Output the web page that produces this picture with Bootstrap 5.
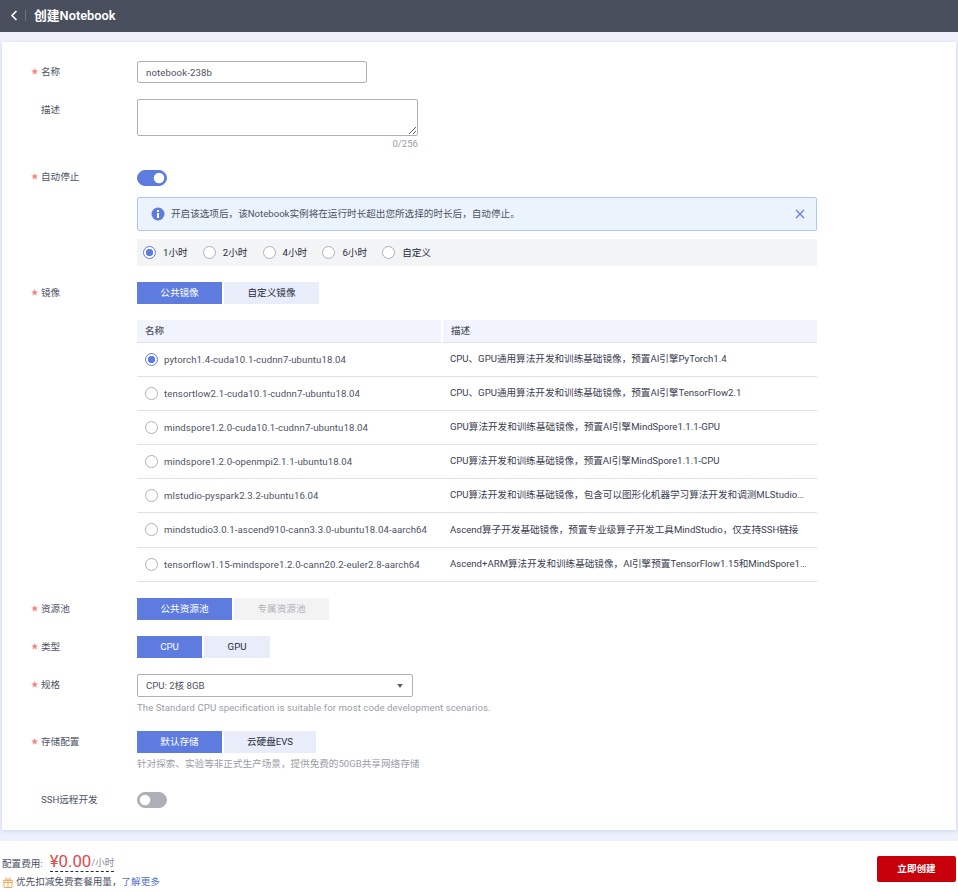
<!DOCTYPE html>
<html lang="zh-CN">
<head>
<meta charset="utf-8">
<title>创建Notebook</title>
<link rel="stylesheet" href="https://cdn.jsdelivr.net/npm/bootstrap@5.3.0/dist/css/bootstrap.min.css">
<style>
html,body{height:892px;overflow:hidden}
body{background:#eef1fb;font-family:Roboto,"Noto Sans CJK SC",sans-serif;font-size:9.6px;line-height:14px;color:#252b3a}
.topbar{height:32px;background:#4a4f5e;color:#fff;padding:0 0 1px 10px}
.topbar h1{font-size:12.8px;font-weight:600;margin:0;line-height:31px}
.topsep{width:1px;height:11px;background:#71757f;margin:0 8px 0 7px}
.sheet{margin:10px 2px 0 2px;height:788px;background:#fff;padding:19px 0 0 29px;box-shadow:0 1px 4px rgba(94,124,224,.25)}
.frow{display:flex}
.flabel{width:106px;flex:none;color:#4d5262;display:flex;align-items:flex-start;line-height:20px;padding-top:1px}
.star{width:10px;flex:none;color:#f5827d;font-size:7.5px}
.up4{margin-top:-4px}
.up3{margin-top:-3px}
.fbody{flex:none;width:680px}
.r-name{height:38px}
.r-desc{height:71px}
.r-stop{height:112px}
.r-img{height:316px}
.r-pool{height:38px}
.r-type{height:38px}
.r-spec{height:57px}
.r-store{height:61px}
.txt{display:block;height:22px;width:230px;border:1px solid #adb0b8;border-radius:2px;padding:0 8px;font-size:9.6px;letter-spacing:.12px;color:#4d5262;background:#fff;box-shadow:none}
.area{display:block;height:37px;width:281px;border:1px solid #adb0b8;border-radius:2px;padding:4px 8px;font-size:9.6px;box-shadow:none}
.count{width:281px;text-align:right;color:#9a9da5;line-height:14px;padding-top:1px}
.sw.form-check{padding:0;margin:0;min-height:0;height:16px;display:flex}
.sw .form-check-input{width:30px;height:16px;margin:0;float:none;border-color:#5e7ce0;background-color:#5e7ce0;box-shadow:none}
.sw .off{background-color:#adb0b8;border-color:#adb0b8;background-image:url("data:image/svg+xml,%3csvg xmlns='http://www.w3.org/2000/svg' viewBox='-4 -4 8 8'%3e%3ccircle r='3' fill='%23fff'/%3e%3c/svg%3e")}
.note{margin:11px 0 8px;height:34px;padding:0 11px 0 13px;background:#ebf4fd;border:1px solid #b1c4f4;border-radius:2px;color:#4d5262;gap:6px}
.note span{flex:1}
.timebar{height:27px;background:#f3f4f6;padding-left:6px;gap:0}
.pick{display:flex;align-items:center;width:59.800px;color:#252b3a}
.pick label{margin-left:7px}
.rd{appearance:none;width:13px;height:13px;margin:0;flex:none;border:1px solid #adb0b8;border-radius:50%;background:#fff;display:block}
.rd:checked{border-color:#5e7ce0;background:radial-gradient(circle,#5e7ce0 0 3.4px,#fff 4px)}
.segs{display:flex;gap:2px}
.seg{height:22px;padding:0;border:0;border-radius:0;font-size:9.6px;line-height:22px;background:#e9edfa;color:#252b3a}
.seg.on{background:#5e7ce0;color:#fff}
.seg.dis{background:#f3f3f3;color:#b0b3ba;opacity:1}
.w85{width:85px}.w95{width:95px}.w92{width:92px}.w65{width:65px}.w66{width:66px}
.imgs{width:680px;margin:16px 0 0;table-layout:fixed;font-size:9.6px;color:#4d5262}
.imgs th,.imgs td{padding:0 8px;vertical-align:middle;height:34px;border-bottom:1px solid #dfe1e6;box-shadow:none;color:#4d5262}
.imgs th{height:22px;background:#f1f4fc;font-weight:500;border-bottom:1px solid #dfe1e6}
.imgs th+th{border-left:2px solid #fff}
.imgs td+td{color:#3b4050;white-space:nowrap;overflow:hidden;text-overflow:ellipsis;padding-right:10px}
.imgname{display:flex;align-items:center;gap:6px;white-space:nowrap}
.imgname span{letter-spacing:.1px;padding-top:1px}
.tall td{height:35px}
.spec{width:276px;height:23px;min-height:0;border:1px solid #adb0b8;border-radius:2px;padding:0 8px;font-size:9.6px;line-height:21px;color:#4d5262;box-shadow:none;background-size:6px 3.5px;background-position:right 9px center;background-image:url("data:image/svg+xml,%3Csvg xmlns='http://www.w3.org/2000/svg' viewBox='0 0 8 5'%3E%3Cpath d='M0 0h8L4 5z' fill='%23575d6c'/%3E%3C/svg%3E")}
.hint{color:#9a9da5;margin-top:3px;line-height:14px;padding-top:1px}
.hint-en{letter-spacing:.08px}
.hint2{margin-top:3px}
.bottom{margin-top:11px;height:51px;background:#fff;padding:0 2px}
.fee{padding-top:10px;color:#4d5262;display:flex;align-items:flex-end;height:31px}
.price{color:#e5484d;font-size:16.800px;line-height:21px;margin-bottom:-1px}
.per{border-bottom:1px dashed #252b3a;height:21px;display:flex;align-items:flex-end;margin-left:7px}
.perw{color:#8a8e99;line-height:16px}
.feelbl{margin-bottom:1px}
.promo{color:#4d5262;line-height:14px;margin-top:3px;gap:3px;padding-left:1px}
.promo a{color:#526ecc;text-decoration:none}
.buy{width:79px;height:26px;padding:0;font-size:9.6px;font-weight:600;color:#fff;background:#c7000b;border:0;border-radius:2px;margin-top:15px}
</style>
</head>
<body>
<header class="topbar d-flex align-items-center">
  <svg width="8" height="11" viewBox="0 0 8 11" aria-hidden="true"><path d="M6.500 1 2 5.500 6.500 10" fill="none" stroke="#fff" stroke-width="1.600"/></svg>
  <span class="topsep"></span>
  <h1>创建Notebook</h1>
</header>
<main class="sheet">
  <div class="frow r-name">
    <div class="flabel"><span class="star">★</span>名称</div>
    <div class="fbody"><input class="form-control txt" value="notebook-238b"></div>
  </div>
  <div class="frow r-desc">
    <div class="flabel"><span class="star"></span>描述</div>
    <div class="fbody"><textarea class="form-control area"></textarea><div class="count">0/256</div></div>
  </div>
  <div class="frow r-stop">
    <div class="flabel up4"><span class="star">★</span>自动停止</div>
    <div class="fbody">
      <div class="form-check form-switch sw"><input class="form-check-input" type="checkbox" checked></div>
      <div class="alert note d-flex align-items-center">
        <svg width="14" height="14" viewBox="0 0 14 14" aria-hidden="true"><circle cx="7" cy="7" r="6.500" fill="#5e7ce0"/><rect x="6" y="6" width="2" height="5" fill="#fff"/><rect x="6" y="3" width="2" height="2" fill="#fff"/></svg>
        <span>开启该选项后，该Notebook实例将在运行时长超出您所选择的时长后，自动停止。</span>
        <svg width="10" height="10" viewBox="0 0 10 10" aria-hidden="true"><path d="M1 1l8 8M9 1 1 9" stroke="#5e7ce0" stroke-width="1.200" fill="none"/></svg>
      </div>
      <div class="timebar d-flex align-items-center">
        <div class="pick"><input class="rd" type="radio" name="t" id="t1" checked><label for="t1">1小时</label></div>
        <div class="pick"><input class="rd" type="radio" name="t" id="t2"><label for="t2">2小时</label></div>
        <div class="pick"><input class="rd" type="radio" name="t" id="t4"><label for="t4">4小时</label></div>
        <div class="pick"><input class="rd" type="radio" name="t" id="t6"><label for="t6">6小时</label></div>
        <div class="pick"><input class="rd" type="radio" name="t" id="tc"><label for="tc">自定义</label></div>
      </div>
    </div>
  </div>
  <div class="frow r-img">
    <div class="flabel"><span class="star">★</span>镜像</div>
    <div class="fbody">
      <div class="segs"><button class="btn seg on w85">公共镜像</button><button class="btn seg w95">自定义镜像</button></div>
      <table class="table imgs">
        <colgroup><col style="width:305px"><col></colgroup>
        <thead><tr><th>名称</th><th>描述</th></tr></thead>
        <tbody>
          <tr><td><div class="imgname"><input class="rd" type="radio" name="m" checked><span>pytorch1.4-cuda10.1-cudnn7-ubuntu18.04</span></div></td><td>CPU、GPU通用算法开发和训练基础镜像，预置AI引擎PyTorch1.4</td></tr>
          <tr><td><div class="imgname"><input class="rd" type="radio" name="m"><span>tensortlow2.1-cuda10.1-cudnn7-ubuntu18.04</span></div></td><td>CPU、GPU通用算法开发和训练基础镜像，预置AI引擎TensorFlow2.1</td></tr>
          <tr><td><div class="imgname"><input class="rd" type="radio" name="m"><span>mindspore1.2.0-cuda10.1-cudnn7-ubuntu18.04</span></div></td><td>GPU算法开发和训练基础镜像，预置AI引擎MindSpore1.1.1-GPU</td></tr>
          <tr><td><div class="imgname"><input class="rd" type="radio" name="m"><span>mindspore1.2.0-openmpi2.1.1-ubuntu18.04</span></div></td><td>CPU算法开发和训练基础镜像，预置AI引擎MindSpore1.1.1-CPU</td></tr>
          <tr><td><div class="imgname"><input class="rd" type="radio" name="m"><span>mlstudio-pyspark2.3.2-ubuntu16.04</span></div></td><td>CPU算法开发和训练基础镜像，包含可以图形化机器学习算法开发和调测MLStudio工具，并支持SSH</td></tr>
          <tr class="tall"><td><div class="imgname"><input class="rd" type="radio" name="m"><span>mindstudio3.0.1-ascend910-cann3.3.0-ubuntu18.04-aarch64</span></div></td><td>Ascend算子开发基础镜像，预置专业级算子开发工具MindStudio，仅支持SSH链接</td></tr>
          <tr><td><div class="imgname"><input class="rd" type="radio" name="m"><span>tensorflow1.15-mindspore1.2.0-cann20.2-euler2.8-aarch64</span></div></td><td>Ascend+ARM算法开发和训练基础镜像，AI引擎预置TensorFlow1.15和MindSpore1.2.0</td></tr>
        </tbody>
      </table>
    </div>
  </div>
  <div class="frow r-pool">
    <div class="flabel"><span class="star">★</span>资源池</div>
    <div class="fbody segs"><button class="btn seg on w95">公共资源池</button><button class="btn seg dis w95" disabled>专属资源池</button></div>
  </div>
  <div class="frow r-type">
    <div class="flabel"><span class="star">★</span>类型</div>
    <div class="fbody segs"><button class="btn seg on w65">CPU</button><button class="btn seg w66">GPU</button></div>
  </div>
  <div class="frow r-spec">
    <div class="flabel"><span class="star">★</span>规格</div>
    <div class="fbody">
      <select class="form-select spec"><option>CPU: 2核 8GB</option></select>
      <div class="hint hint-en">The Standard CPU specification is suitable for most code development scenarios.</div>
    </div>
  </div>
  <div class="frow r-store">
    <div class="flabel"><span class="star">★</span>存储配置</div>
    <div class="fbody">
      <div class="segs"><button class="btn seg on w85">默认存储</button><button class="btn seg w92">云硬盘EVS</button></div>
      <div class="hint hint2">针对探索、实验等非正式生产场景，提供免费的50GB共享网络存储</div>
    </div>
  </div>
  <div class="frow">
    <div class="flabel up3"><span class="star"></span>SSH远程开发</div>
    <div class="fbody"><div class="form-check form-switch sw"><input class="form-check-input off" type="checkbox"></div></div>
  </div>
</main>
<footer class="bottom d-flex justify-content-between align-items-start">
  <div>
    <div class="fee"><span class="feelbl">配置费用:</span><span class="per"><span class="price">¥0.00</span><span class="perw">/小时</span></span></div>
    <div class="promo d-flex align-items-center">
      <svg width="10" height="11" viewBox="0 0 10 11" aria-hidden="true"><path d="M.5 3.500h9v2h-9zM1 5.500h8v5H1zM5 3.500v7M5 3.500C3 3.500 2 2.500 2.500 1.500S5 1.500 5 3.500c0-2 2-3 2.500-2S7 3.500 5 3.500" fill="none" stroke="#f5a75b" stroke-width="1"/></svg>
      <span>优先扣减免费套餐用量，<a href="#">了解更多</a></span>
    </div>
  </div>
  <button class="btn buy">立即创建</button>
</footer>
<script src="https://cdn.jsdelivr.net/npm/bootstrap@5.3.0/dist/js/bootstrap.bundle.min.js"></script>
</body>
</html>
